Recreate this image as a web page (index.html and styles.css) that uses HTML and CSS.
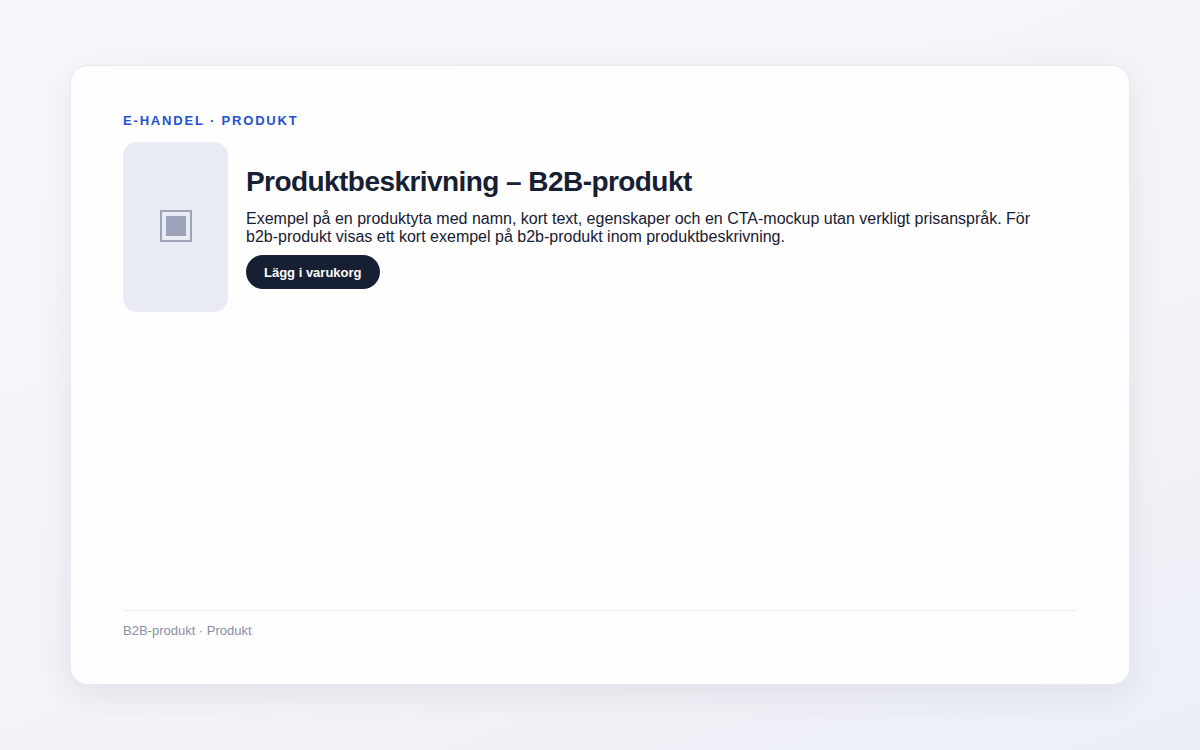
FILE: index.html
```html
<!DOCTYPE html>
<html lang="sv">
<head>
    <meta charset="UTF-8">
    <meta name="viewport" content="width=device-width, initial-scale=1.0">
    <title>Produktbeskrivning – B2B-produkt</title>
    <link rel="stylesheet" href="styles.css">
</head>
<body>
    <main class="card">
        <p class="kicker">E-handel · Produkt</p>
        <section class="product">
            <div class="thumb">
                <svg class="thumb-icon" viewBox="0 0 32 32" aria-hidden="true">
                    <rect x="1" y="1" width="30" height="30" fill="none" stroke="currentColor" stroke-width="2"/>
                    <rect x="6" y="6" width="20" height="20" fill="currentColor"/>
                </svg>
            </div>
            <div class="info">
                <h1>Produktbeskrivning – B2B-produkt</h1>
                <p class="text">Exempel på en produktyta med namn, kort text, egenskaper och en CTA-mockup utan verkligt prisanspråk. För b2b-produkt visas ett kort exempel på b2b-produkt inom produktbeskrivning.</p>
                <button type="button" class="cta">Lägg i varukorg</button>
            </div>
        </section>
        <footer class="foot">B2B-produkt · Produkt</footer>
    </main>
</body>
</html>
```
FILE: styles.css
```css
*{
    box-sizing: border-box;
}
body{
    margin: 0;
    min-height: 100vh;
    display: flex;
    padding: 65px 70px;
    font-family: "Liberation Sans", Arial, sans-serif;
    color: #172033;
    background: linear-gradient(160deg, #f8f8fc 0%, #f1f1f6 75%, #ebeff8 100%);
}
.card{
    flex: 1;
    display: flex;
    flex-direction: column;
    padding: 47px 52px 45px;
    background: #fefefe;
    border: 1px solid #e8e9f1;
    border-radius: 18px;
    box-shadow: 0 8px 32px rgba(23, 32, 51, 0.08);
}
.kicker{
    margin: 0 0 13px;
    font-size: 13px;
    line-height: 16px;
    font-weight: 700;
    letter-spacing: 0.14em;
    text-transform: uppercase;
    color: #1f51d0;
}
.product{
    display: flex;
    align-items: center;
    gap: 18px;
}
.thumb{
    flex: none;
    width: 105px;
    height: 170px;
    padding-bottom: 2px;
    display: flex;
    align-items: center;
    justify-content: center;
    border-radius: 14px;
    background: #e8ebf4;
    color: #9ca3b8;
}
.thumb-icon{
    width: 32px;
    height: 32px;
}
.info{
    flex: 1;
}
h1{
    margin: 0 0 11px;
    font-size: 28px;
    line-height: 34px;
    letter-spacing: -0.02em;
}
.text{
    max-width: 810px;
    margin: 0 0 9px;
    font-size: 16px;
    line-height: 18px;
}
.cta{
    display: block;
    height: 34px;
    padding: 0 18px;
    border: none;
    border-radius: 17px;
    background: #172033;
    color: #fff;
    font-family: inherit;
    font-size: 13px;
    font-weight: 700;
}
.foot{
    margin-top: auto;
    padding-top: 12px;
    border-top: 1px solid #ededf4;
    font-size: 13px;
    line-height: 16px;
    color: #8a8fa5;
}
```
